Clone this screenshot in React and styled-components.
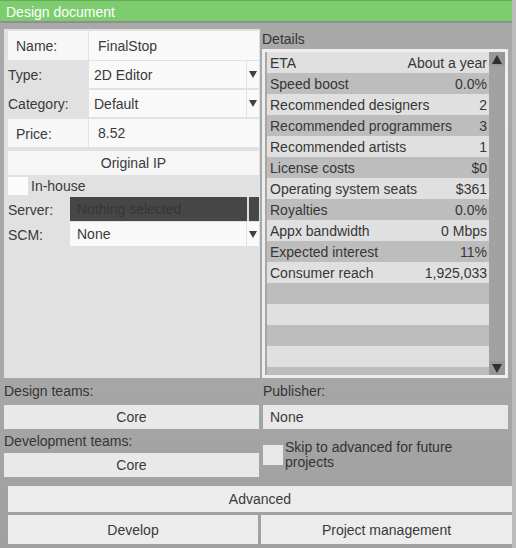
import styled, { createGlobalStyle } from 'styled-components';

const GlobalStyle = createGlobalStyle`
  html, body {
    margin: 0;
    padding: 0;
    background: #bcbcbc;
  }
  body {
    font-family: "Liberation Sans", Arial, sans-serif;
    font-size: 14px;
    color: #3a3a3a;
  }
`;

const Window = styled.div`
  width: 512px;
  height: 548px;
  background: linear-gradient(180deg, #a9a9a9 0%, #a6a6a6 70%, #a0a0a0 100%);
  display: flex;
  flex-direction: column;
  overflow: hidden;
`;

const TitleBar = styled.div`
  height: 23px;
  background: #7ccd6e;
  border-top: 1px solid #6aa85e;
  border-bottom: 2px solid #8f8f8f;
  color: #ffffff;
  font-size: 14px;
  display: flex;
  align-items: center;
  padding: 1px 0 0 6px;
  width: 516px;
  box-sizing: border-box;
`;

const Content = styled.div`
  padding: 6px 0 0 4px;
`;

const TopGrid = styled.div`
  display: grid;
  grid-template-columns: 256px 252px;
  height: 348px;
`;

const LeftPanel = styled.div`
  background: #e1e1e1;
  padding: 2px 1px 0 4px;
  display: flex;
  flex-direction: column;
`;

const Row = styled.div`
  display: grid;
  grid-template-columns: ${(p) => p.$label || 81}px 1fr;
  height: ${(p) => p.$h}px;
  margin-top: ${(p) => p.$mt || 0}px;
  align-items: stretch;
`;

const Label = styled.div`
  display: flex;
  align-items: center;
  padding-left: ${(p) => (p.$boxed ? 8 : 0)}px;
  background: ${(p) => (p.$boxed ? '#f7f7f7' : 'transparent')};
  margin-right: ${(p) => (p.$boxed ? 1 : 0)}px;
  padding-top: 1px;
`;

const Field = styled.div`
  display: flex;
  align-items: center;
  background: #f9f9f9;
  padding-left: ${(p) => p.$pad || 9}px;
`;

const Select = styled.div`
  display: grid;
  grid-template-columns: 1fr ${(p) => p.$arrow || 12}px;
  gap: ${(p) => p.$gap || 1}px;
  background: ${(p) => (p.$dark ? 'transparent' : '#e2e2e2')};
`;

const SelectValue = styled.div`
  display: flex;
  align-items: center;
  padding-left: ${(p) => p.$pad || 5}px;
  background: ${(p) => (p.$dark ? '#474747' : '#f9f9f9')};
  color: ${(p) => (p.$dark ? '#363636' : '#3a3a3a')};
`;

const ArrowCell = styled.div`
  display: flex;
  align-items: center;
  justify-content: center;
  background: ${(p) => (p.$dark ? '#474747' : '#f9f9f9')};
`;

const DownArrow = styled.span`
  width: 0;
  height: 0;
  border-left: ${(p) => (p.$big ? 5 : 4)}px solid transparent;
  border-right: ${(p) => (p.$big ? 5 : 4)}px solid transparent;
  border-top: ${(p) => (p.$big ? 9 : 7)}px solid ${(p) => (p.$big ? '#2f2f2f' : '#3f3f3f')};
`;

const UpArrow = styled.span`
  width: 0;
  height: 0;
  border-left: 5px solid transparent;
  border-right: 5px solid transparent;
  border-bottom: 9px solid #2f2f2f;
`;

const WideButton = styled.div`
  display: flex;
  align-items: center;
  justify-content: center;
  background: ${(p) => p.$bg || '#f6f6f6'};
  height: ${(p) => p.$h}px;
  margin-top: ${(p) => p.$mt || 0}px;
  color: #3a3a3a;
`;

const CheckRow = styled.div`
  display: flex;
  align-items: flex-start;
  gap: 3px;
  height: 18px;
  margin-top: 2px;
`;

const Checkbox = styled.div`
  width: ${(p) => p.$w || 20}px;
  height: ${(p) => p.$h || 18}px;
  background: ${(p) => p.$bg || '#fbfbfb'};
  flex-shrink: 0;
`;

const CheckText = styled.div`
  line-height: 16px;
  padding-top: 1px;
`;

const RightColumn = styled.div`
  display: flex;
  flex-direction: column;
`;

const SectionLabel = styled.div`
  height: ${(p) => p.$h || 18}px;
  display: flex;
  align-items: ${(p) => (p.$center ? 'center' : 'flex-start')};
  padding-left: ${(p) => p.$pl || 0}px;
  padding-top: ${(p) => (p.$center ? 0 : 2)}px;
  color: #353535;
`;

const ListBox = styled.div`
  margin-left: 2px;
  width: 246px;
  height: 329px;
  box-sizing: border-box;
  border: 3px solid #eeeeee;
  display: flex;
  overflow: hidden;
`;

const ListRows = styled.div`
  flex: 1;
  padding-left: 2px;
  display: flex;
  flex-direction: column;
  overflow: hidden;
`;

const ListRow = styled.div`
  height: 21px;
  flex-shrink: 0;
  display: flex;
  justify-content: space-between;
  align-items: center;
  padding: 0 2px 0 3px;
  background: ${(p) => (p.$alt ? '#bdbdbd' : '#e0e0e0')};
  color: #363636;
`;

const Scrollbar = styled.div`
  width: 16px;
  background: #a2a2a2;
  display: flex;
  flex-direction: column;
  justify-content: space-between;
`;

const ScrollButton = styled.div`
  height: 14px;
  display: flex;
  align-items: center;
  justify-content: center;
  background: #979797;
`;

const BottomGrid = styled.div`
  display: grid;
  grid-template-columns: 255px 245px;
  column-gap: 4px;
`;

const Stack = styled.div`
  display: flex;
  flex-direction: column;
`;

const PublisherField = styled.div`
  height: 24px;
  background: #e8e8e8;
  display: flex;
  align-items: center;
  padding-left: 7px;
`;

const SkipRow = styled.div`
  display: flex;
  align-items: center;
  gap: 2px;
  margin-top: 11px;
  font-size: 14px;
  line-height: 15px;
  color: #333;
`;

const Footer = styled.div`
  padding: 9px 0 0 8px;
  display: flex;
  flex-direction: column;
  gap: 3px;
`;

const AdvancedButton = styled(WideButton)`
  width: 504px;
`;

const FooterRow = styled.div`
  display: grid;
  grid-template-columns: 250px 251px;
  column-gap: 3px;
`;

const details = [
  ['ETA', 'About a year'],
  ['Speed boost', '0.0%'],
  ['Recommended designers', '2'],
  ['Recommended programmers', '3'],
  ['Recommended artists', '1'],
  ['License costs', '$0'],
  ['Operating system seats', '$361'],
  ['Royalties', '0.0%'],
  ['Appx bandwidth', '0 Mbps'],
  ['Expected interest', '11%'],
  ['Consumer reach', '1,925,033'],
  ['', ''],
  ['', ''],
  ['', ''],
  ['', ''],
  ['', ''],
];

export default function App() {
  return (
    <>
      <GlobalStyle />
      <Window>
        <TitleBar>Design document</TitleBar>
        <Content>
          <TopGrid>
            <LeftPanel>
              <Row $h={29}>
                <Label $boxed>Name:</Label>
                <Field>FinalStop</Field>
              </Row>
              <Row $h={27} $mt={1}>
                <Label>Type:</Label>
                <Select>
                  <SelectValue>2D Editor</SelectValue>
                  <ArrowCell><DownArrow /></ArrowCell>
                </Select>
              </Row>
              <Row $h={27} $mt={2}>
                <Label>Category:</Label>
                <Select>
                  <SelectValue>Default</SelectValue>
                  <ArrowCell><DownArrow /></ArrowCell>
                </Select>
              </Row>
              <Row $h={28} $mt={2}>
                <Label $boxed>Price:</Label>
                <Field>8.52</Field>
              </Row>
              <WideButton $h={24} $mt={4}>Original IP</WideButton>
              <CheckRow>
                <Checkbox />
                <CheckText>In-house</CheckText>
              </CheckRow>
              <Row $h={24} $mt={2} $label={62}>
                <Label>Server:</Label>
                <Select $dark $gap={2} $arrow={10}>
                  <SelectValue $dark $pad={7}>Nothing selected</SelectValue>
                  <ArrowCell $dark />
                </Select>
              </Row>
              <Row $h={24} $mt={1} $label={62}>
                <Label>SCM:</Label>
                <Select>
                  <SelectValue $pad={7}>None</SelectValue>
                  <ArrowCell><DownArrow /></ArrowCell>
                </Select>
              </Row>
            </LeftPanel>

            <RightColumn>
              <SectionLabel $pl={2}>Details</SectionLabel>
              <ListBox>
                <ListRows>
                  {details.map(([k, v], i) => (
                    <ListRow key={i} $alt={i % 2 === 1}>
                      <span>{k}</span>
                      <span>{v}</span>
                    </ListRow>
                  ))}
                </ListRows>
                <Scrollbar>
                  <ScrollButton><UpArrow /></ScrollButton>
                  <ScrollButton><DownArrow $big /></ScrollButton>
                </Scrollbar>
              </ListBox>
            </RightColumn>
          </TopGrid>

          <BottomGrid>
            <Stack>
              <SectionLabel $h={28} $center>Design teams:</SectionLabel>
              <WideButton $h={24} $bg="#e9e9e9">Core</WideButton>
              <SectionLabel $h={24} $center>Development teams:</SectionLabel>
              <WideButton $h={24} $bg="#e9e9e9">Core</WideButton>
            </Stack>
            <Stack>
              <SectionLabel $h={28} $center>Publisher:</SectionLabel>
              <PublisherField>None</PublisherField>
              <SkipRow>
                <Checkbox $w={20} $h={20} $bg="#e8e8e8" />
                <span>Skip to advanced for future<br />projects</span>
              </SkipRow>
            </Stack>
          </BottomGrid>
        </Content>

        <Footer>
          <AdvancedButton $h={26} $bg="#ececec">Advanced</AdvancedButton>
          <FooterRow>
            <WideButton $h={29} $bg="#ececec">Develop</WideButton>
            <WideButton $h={29} $bg="#ececec">Project management</WideButton>
          </FooterRow>
        </Footer>
      </Window>
    </>
  );
}
